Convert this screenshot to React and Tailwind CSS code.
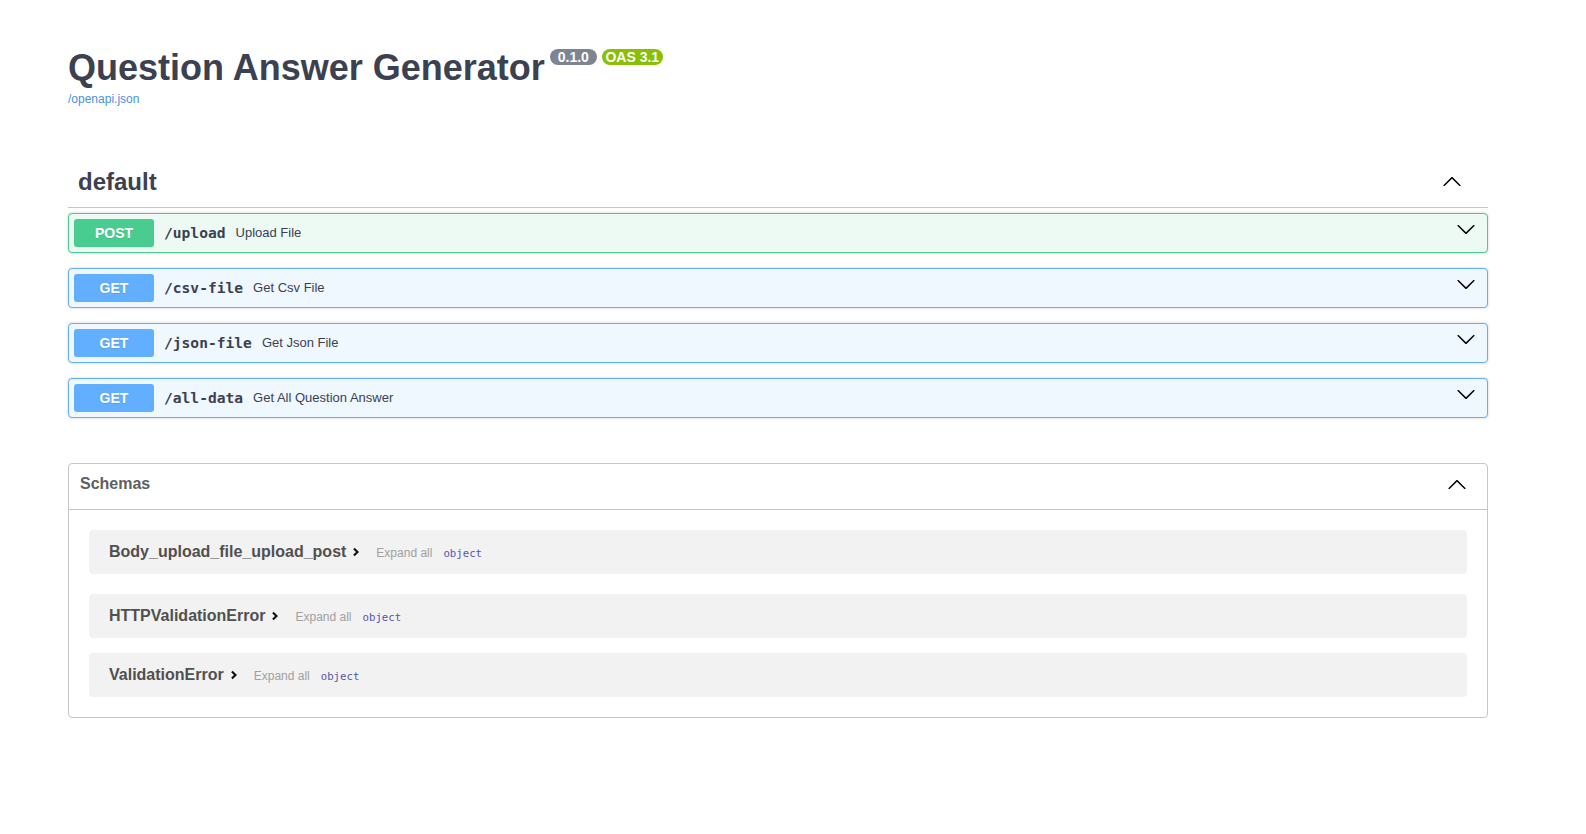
const ChevronUp = ({ className = '' }) => (
  <svg width="20" height="20" viewBox="0 0 20 20" className={className} fill="currentColor">
    <path d="M 17.418 14.908 C 17.69 15.176 18.127 15.176 18.397 14.908 C 18.667 14.64 18.668 14.207 18.397 13.939 L 10.489 6.109 C 10.219 5.841 9.782 5.841 9.51 6.109 L 1.602 13.939 C 1.332 14.207 1.332 14.64 1.602 14.908 C 1.873 15.176 2.311 15.176 2.581 14.908 L 10 7.767 L 17.418 14.908 Z" />
  </svg>
);

const ChevronDown = ({ className = '' }) => (
  <svg width="20" height="20" viewBox="0 0 20 20" className={className} fill="currentColor">
    <path
      fillRule="evenodd"
      d="M17.418 6.109c.272-.268.709-.268.979 0s.271.701 0 .969l-7.908 7.83c-.27.268-.707.268-.979 0l-7.908-7.83c-.27-.268-.27-.701 0-.969.271-.268.709-.268.979 0L10 13.25l7.418-7.141z"
    />
  </svg>
);

const ModelArrow = () => (
  <svg width="20" height="20" viewBox="0 0 24 24" className="self-center shrink-0 text-[#111]" fill="currentColor">
    <path d="M10.4 6.8 8.6 8.6 12 12l-3.4 3.4 1.8 1.8 5.2-5.2z" />
  </svg>
);

const operations = [
  { method: 'POST', path: '/upload', summary: 'Upload File' },
  { method: 'GET', path: '/csv-file', summary: 'Get Csv File' },
  { method: 'GET', path: '/json-file', summary: 'Get Json File' },
  { method: 'GET', path: '/all-data', summary: 'Get All Question Answer' },
];

const schemas = [
  { name: 'Body_upload_file_upload_post', mb: 'mb-[20px]' },
  { name: 'HTTPValidationError', mb: 'mb-[15px]' },
  { name: 'ValidationError', mb: 'mb-0' },
];

const mono = "font-['DejaVu_Sans_Mono',monospace]";

const App = () => {
  return (
    <div className="min-h-screen w-full bg-white font-['Liberation_Sans',Arial,sans-serif] text-[#3b4151]">
      <div className="ml-[68px] w-[1420px]">
        {/* Info */}
        <div className="pt-[47px]">
          <div className="flex items-start">
            <h2 className="text-[36px] leading-[42px] font-bold text-[#3b4151]">
              Question Answer Generator
            </h2>
            <span className="ml-[5px] mt-[2px] h-[16px] w-[47px] rounded-full bg-[#7d8492] text-white text-[14px] leading-[16px] font-bold text-center">
              0.1.0
            </span>
            <span className="ml-[5px] mt-[2px] h-[16px] w-[61px] rounded-full bg-[#89bf04] text-white text-[14px] leading-[16px] font-bold text-center">
              OAS 3.1
            </span>
          </div>
          <a className="block mt-[3px] text-[12px] leading-[14px] text-[#4990e2] w-fit">/openapi.json</a>
        </div>

        {/* Tag: default */}
        <div className="mt-[50px] flex items-center justify-between border-b border-[#c4c6cb] pt-[10px] pb-[9px] pl-[10px] pr-[26px]">
          <h3 className="text-[24px] leading-[32px] font-bold text-[#3b4151]">default</h3>
          <ChevronUp className="mb-[3px] text-[#000]" />
        </div>

        <div className="mt-[5px]">
          {operations.map((op) => {
            const post = op.method === 'POST';
            return (
              <div
                key={op.path}
                className={`flex items-center h-[40px] mb-[15px] px-[5px] rounded-[4px] border shadow-[0_0_3px_rgba(0,0,0,0.19)] ${
                  post ? 'bg-[#edfaf4] border-[#49cc90]' : 'bg-[#eff7ff] border-[#61affe]'
                }`}
              >
                <span
                  className={`w-[80px] h-[28px] shrink-0 rounded-[3px] flex items-center justify-center text-white text-[14px] font-bold [text-shadow:0_1px_0_rgba(0,0,0,0.1)] ${
                    post ? 'bg-[#49cc90]' : 'bg-[#61affe]'
                  }`}
                >
                  {op.method}
                </span>
                <span className={`${mono} px-[10px] text-[14.6px] font-bold text-[#3b4151]`}>{op.path}</span>
                <span className="text-[13px] text-[#3b4151]">{op.summary}</span>
                <ChevronDown className="ml-auto mr-[6px] self-start mt-[5px] text-[#000]" />
              </div>
            );
          })}
        </div>

        {/* Schemas */}
        <section className="mt-[45px] rounded-[4px] border border-[#c4c6cb]">
          <div className="flex items-start justify-between h-[46px] pt-[10px] pl-[11px] pr-[20px] border-b border-[#c4c6cb]">
            <h4 className="text-[16px] leading-[20px] font-bold text-[#606060]">Schemas</h4>
            <ChevronUp className="text-[#000]" />
          </div>
          <div className="pt-[20px] pb-[20px]">
            {schemas.map((s) => (
              <div
                key={s.name}
                className={`mx-[20px] ${s.mb} h-[44px] rounded-[4px] bg-[#f2f2f2] flex items-center pl-[20px]`}
              >
                <div className="flex items-baseline">
                  <span className="text-[16px] font-bold text-[#505050]">{s.name}</span>
                  <ModelArrow />
                  <span className="ml-[10px] text-[12px] text-[#a0a0a0]">Expand all</span>
                  <span className={`${mono} ml-[11px] text-[10.7px] text-[#55a]`}>object</span>
                </div>
              </div>
            ))}
          </div>
        </section>
      </div>
    </div>
  );
};

export default App;
